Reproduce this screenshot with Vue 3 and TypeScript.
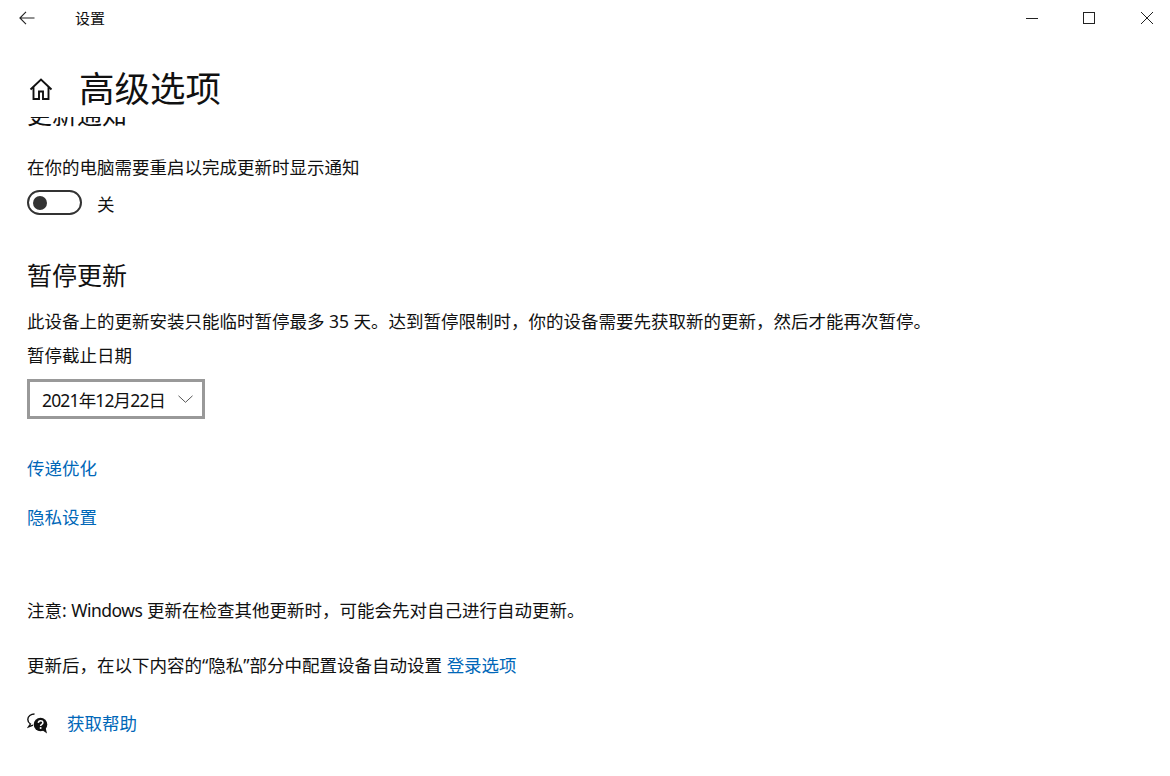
<script setup lang="ts">
const pausedUntil: string = '2021年12月22日'
</script>

<template>
  <div class="window">
    <header class="titlebar">
      <svg class="back" width="16" height="14" viewBox="0 0 16 14" fill="none" stroke="#222" stroke-width="1.1">
        <path d="M15.5 7H1M7 .8 .9 7l6.1 6.2" />
      </svg>
      <span class="app-name">设置</span>
      <div class="controls">
        <svg width="12" height="12" viewBox="0 0 12 12" fill="none" stroke="#222" stroke-width="1"><path d="M0 6.5h12" /></svg>
        <svg width="12" height="12" viewBox="0 0 12 12" fill="none" stroke="#222" stroke-width="1"><rect x=".5" y=".5" width="11" height="11" /></svg>
        <svg width="14" height="14" viewBox="0 0 14 14" fill="none" stroke="#222" stroke-width="1"><path d="M1 1l12 12M13 1 1 13" /></svg>
      </div>
    </header>
    <div class="page-head">
      <svg class="home" width="24" height="24" viewBox="0 0 24 24" fill="none" stroke="#111" stroke-width="1.9">
        <path d="M1.5 12.500 12 2.500l10.500 10M4.500 10v12h5.500v-7.500h4V22h5.500V10" />
      </svg>
      <h1>高级选项</h1>
    </div>
    <main class="scroller">
      <h2 class="clipped">更新通知</h2>
      <p class="body notify">在你的电脑需要重启以完成更新时显示通知</p>
      <div class="toggle-row">
        <span class="toggle"><span class="knob"></span></span>
        <span class="body toggle-label">关</span>
      </div>
      <h2 class="pause-title">暂停更新</h2>
      <p class="body desc">此设备上的更新安装只能临时暂停最多 35 天。达到暂停限制时，你的设备需要先获取新的更新，然后才能再次暂停。</p>
      <p class="body date-label">暂停截止日期</p>
      <div class="select">
        <span class="select-value">{{ pausedUntil }}</span>
        <svg width="15" height="8" viewBox="0 0 15 8" fill="none" stroke="#555" stroke-width="1"><path d="M.5 .8l7 6.500 7-6.500" /></svg>
      </div>
      <a class="link first-link">传递优化</a>
      <a class="link second-link">隐私设置</a>
      <p class="body note">注意: <span class="latin">Windows</span> 更新在检查其他更新时，可能会先对自己进行自动更新。</p>
      <p class="body privacy">更新后，在以下内容的“隐私”部分中配置设备自动设置 <a class="link inline">登录选项</a></p>
      <div class="help">
        <svg class="help-icon" width="21" height="21" viewBox="0 0 21 21">
          <path d="M7.500 1C3.900 1 .8 3.300 .8 6.500c0 1.900 1 3.500 2.600 4.500L1.500 14l4.500-1.800" fill="#fff" stroke="#111" stroke-width="1.400" />
          <circle cx="13.500" cy="11.500" r="6.800" fill="#111" />
          <path d="M15 17l5 3.500-1.500-6z" fill="#111" />
          <path d="M11.300 9.900c.2-2.900 4.600-2.900 4.600-.2 0 1.700-2.300 1.600-2.300 3.300" fill="none" stroke="#fff" stroke-width="1.500" />
          <circle cx="13.600" cy="15" r="1" fill="#fff" />
        </svg>
        <a class="link">获取帮助</a>
      </div>
    </main>
  </div>
</template>

<style scoped>
.window {
  width: 1170px;
  height: 776px;
  background: #fff;
  color: #111;
  font-family: "Noto Sans", "Noto Sans CJK SC", sans-serif;
  display: flex;
  flex-direction: column;
  overflow: hidden;
}
.titlebar {
  height: 35px;
  flex: none;
  display: flex;
  align-items: center;
  padding-left: 19px;
  padding-right: 16px;
}
.back { flex: none; }
.app-name {
  font-size: 15px;
  margin-left: 40px;
}
.controls {
  margin-left: auto;
  display: flex;
  align-items: center;
  gap: 45px;
}
.page-head {
  height: 82px;
  flex: none;
  display: flex;
  align-items: center;
  padding-left: 29px;
  padding-top: 23px;
  box-sizing: border-box;
}
.home {
  flex: none;
  margin-top: 3px;
}
h1 {
  font-size: 35.500px;
  line-height: 42px;
  font-weight: 400;
  margin: 0 0 0 26px;
}
.scroller {
  flex: 1;
  overflow: hidden;
  padding-left: 27px;
}
h2 {
  font-weight: 400;
  margin: 0;
}
.clipped {
  font-size: 25px;
  line-height: 34px;
  margin-top: -20px;
}
.body {
  font-size: 17.500px;
  line-height: 24px;
  margin: 0;
}
.notify { margin-top: 24px; }
.toggle-row {
  display: flex;
  align-items: center;
  gap: 15px;
  margin-top: 11px;
  height: 25px;
}
.toggle {
  width: 55px;
  height: 25px;
  box-sizing: border-box;
  border: 2.500px solid #333;
  border-radius: 13px;
  display: flex;
  align-items: center;
  padding-left: 4px;
}
.knob {
  width: 14px;
  height: 14px;
  border-radius: 50%;
  background: #333;
}
.toggle-label { margin-top: 2px; }
.pause-title {
  font-size: 25px;
  line-height: 34px;
  margin-top: 43px;
}
.desc { margin-top: 17px; }
.date-label { margin-top: 10px; }
.select {
  width: 178px;
  height: 40px;
  margin-top: 12px;
  box-sizing: border-box;
  border: 3px solid #999;
  display: flex;
  align-items: center;
  justify-content: space-between;
  padding: 0 9px 0 12px;
  font-size: 17.500px;
}
.select-value { letter-spacing: -0.85px; }
.latin { letter-spacing: -0.5px; }
.link {
  color: #0067b8;
  font-size: 17.500px;
  line-height: 24px;
  display: block;
}
.first-link { margin-top: 37px; }
.second-link { margin-top: 25px; }
.note { margin-top: 69px; }
.privacy { margin-top: 31px; }
.inline { display: inline; }
.help {
  display: flex;
  align-items: center;
  gap: 19px;
  margin-top: 34px;
  height: 24px;
}
.help-icon { flex: none; }
</style>
